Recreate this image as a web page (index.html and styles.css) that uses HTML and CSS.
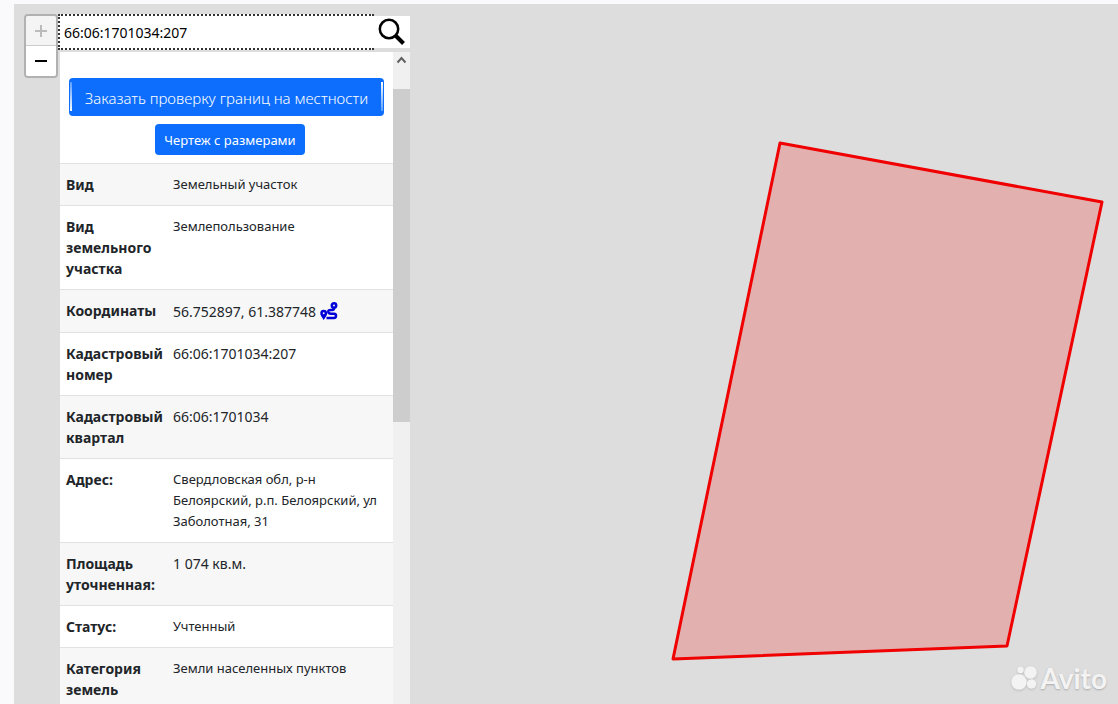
FILE: index.html
```html
<!DOCTYPE html>
<html lang="ru">
<head>
<meta charset="utf-8">
<title>Кадастровая карта</title>
<link rel="stylesheet" href="styles.css">
</head>
<body>
<main class="map">
  <svg class="parcel" width="1104" height="700" viewBox="14 4 1104 700" role="img" aria-label="Граница участка">
    <path d="M780 143L1102 202L1007 646L673 659Z"/>
  </svg>

  <div class="zoom">
    <button class="zoom-btn" type="button" aria-label="Приблизить" disabled>
      <svg width="14" height="14" viewBox="0 0 14 14"><path d="M7 1V13M1 7H13"/></svg>
    </button>
    <button class="zoom-btn" type="button" aria-label="Отдалить">
      <svg width="14" height="14" viewBox="0 0 14 14"><path d="M1 7H13"/></svg>
    </button>
  </div>

  <section class="sidebar">
    <form class="search">
      <input class="search-input" type="text" value="66:06:1701034:207" aria-label="Кадастровый номер">
      <button class="search-btn" type="button" aria-label="Найти">
        <svg width="28" height="28" viewBox="0 0 28 28"><circle cx="11" cy="11" r="9.2"/><path class="handle" d="M17.500 17.500L25.500 25.500"/></svg>
      </button>
    </form>

    <div class="panel">
      <div class="content">
        <div class="actions">
          <button class="btn btn-main" type="button">Заказать проверку границ на местности</button>
          <button class="btn btn-small" type="button">Чертеж с размерами</button>
        </div>
        <table class="info">
          <tbody>
            <tr><th scope="row">Вид</th><td>Земельный участок</td></tr>
            <tr><th scope="row">Вид земельного участка</th><td>Землепользование</td></tr>
            <tr><th scope="row">Координаты</th><td class="num"><div class="coords">56.752897, 61.387748
              <a class="route" href="#route" aria-label="Маршрут"><svg width="18" height="18" viewBox="0 0 18 18"><circle cx="14" cy="3.500" r="2.200"/><path d="M14 6Q14 8 12 8H10.500Q8 8 8.300 10Q8.600 11.700 11 11.700H14Q16 11.700 16 13.800Q16 16 14 16H6.500"/><circle cx="3.700" cy="11.300" r="2.200"/><path d="M2 13L3.700 15.700L5.400 13"/></svg></a></div></td></tr>
            <tr><th scope="row">Кадастровый номер</th><td class="num">66:06:1701034:207</td></tr>
            <tr><th scope="row">Кадастровый квартал</th><td class="num">66:06:1701034</td></tr>
            <tr><th scope="row">Адрес:</th><td>Свердловская обл, р-н Белоярский, р.п. Белоярский, ул Заболотная, 31</td></tr>
            <tr><th scope="row">Площадь уточненная:</th><td class="num">1 074 кв.м.</td></tr>
            <tr><th scope="row">Статус:</th><td>Учтенный</td></tr>
            <tr><th scope="row">Категория земель</th><td>Земли населенных пунктов</td></tr>
          </tbody>
        </table>
      </div>
      <div class="scrollbar" aria-hidden="true">
        <div class="scroll-up"><svg width="11" height="8" viewBox="0 0 11 8"><path d="M1.500 6.500L5.500 2L9.500 6.500"/></svg></div>
        <div class="scroll-thumb"></div>
      </div>
    </div>
  </section>

  <div class="watermark">
    <svg width="28" height="26" viewBox="0 0 28 26"><circle cx="8" cy="17" r="7.700"/><circle cx="19.500" cy="7.500" r="6.300"/><circle cx="9.500" cy="5" r="3.200"/><circle cx="20.500" cy="19" r="4.700"/></svg>
    <span>Avito</span>
  </div>
</main>
</body>
</html>
```
FILE: styles.css
```css
* {
  box-sizing: border-box;
}

body {
  margin: 0;
  height: 100vh;
  padding: 4px 0 0 14px;
  overflow: hidden;
  background: #fafafc;
  color: #212529;
  font: 14px/21px "Noto Sans", "Open Sans", sans-serif;
}

button,
input {
  font: inherit;
  color: inherit;
}

.map {
  position: relative;
  display: flex;
  align-items: flex-start;
  height: 100%;
  padding: 10px;
  padding-bottom: 0;
  background: #ddd;
  overflow: hidden;
}

.parcel {
  position: absolute;
  top: 0;
  left: 0;
}

.parcel path {
  fill: #f00;
  fill-opacity: 0.2;
  stroke: #f00000;
  stroke-width: 3;
  stroke-linejoin: round;
}

.zoom {
  display: flex;
  flex-direction: column;
  width: 34px;
  border: 2px solid #b1b1b1;
  border-radius: 4px;
  overflow: hidden;
}

.zoom-btn {
  display: flex;
  align-items: center;
  justify-content: center;
  height: 30px;
  padding: 0;
  border: 0;
  background: #fff;
}

.zoom-btn:first-child {
  border-bottom: 1px solid #ccc;
  background: #f4f4f4;
}

.zoom-btn path {
  stroke: #000;
  stroke-width: 2;
}

.zoom-btn:disabled path {
  stroke: #bbb;
}

.sidebar {
  display: flex;
  flex-direction: column;
  width: 352px;
  height: 100%;
}

.search {
  display: flex;
  align-items: center;
  height: 36px;
}

.search-input {
  flex: 1;
  min-width: 0;
  height: 36px;
  padding: 0 4px;
  border: 2px dotted #333;
  border-right: 0;
  border-radius: 0;
  outline: 0;
  background: #fff;
  color: #000;
}

.search-btn {
  display: flex;
  align-items: center;
  justify-content: center;
  width: 36px;
  height: 32px;
  padding: 0;
  border: 0;
  background: #fff;
}

.search-btn svg {
  fill: none;
  stroke: #000;
  stroke-width: 2.5;
}

.search-btn .handle {
  stroke-width: 4;
}

.panel {
  display: flex;
  flex: 1;
  min-height: 0;
  margin: 2px 0 0 2px;
}

.content {
  flex: 1;
  overflow: hidden;
  background: #fff;
}

.actions {
  display: flex;
  flex-direction: column;
  gap: 8px;
  padding: 26px 9px 8px;
}

.btn {
  padding: 2px 0 0;
  border: 0;
  border-radius: 4px;
  background: #0d6efd;
  color: #fff;
  white-space: nowrap;
}

.btn-main {
  height: 38px;
  background:
    linear-gradient(#5b9dfe, #fff) 1px 4px / 2px 29px no-repeat,
    linear-gradient(#fff, #5b9dfe) right 1px top 4px / 2px 29px no-repeat,
    #0d6efd;
  font-size: 15px;
  font-weight: 300;
}

.btn-small {
  width: 150px;
  height: 31px;
  margin-left: 86px;
  font-size: 13px;
}

.info {
  width: 100%;
  border-collapse: separate;
  border-spacing: 0;
  table-layout: fixed;
}

.info th,
.info td {
  padding: 10px 6px;
  border-top: 1px solid #dfe1e3;
  text-align: left;
  vertical-align: top;
}

.info th {
  width: 107px;
  font-weight: 700;
}

.info td {
  font-size: 13px;
}

.info .num {
  font-size: 14px;
}

.info tr:nth-child(odd) {
  background: #f7f7f7;
}

.coords {
  display: flex;
  align-items: center;
  gap: 4px;
  height: 22px;
}

.route {
  display: flex;
}

.route svg {
  fill: none;
  stroke: #0000d8;
  stroke-width: 2.5;
}

.scrollbar {
  width: 17px;
  background: #f0f0f0;
}

.scroll-up {
  display: flex;
  justify-content: center;
  height: 37px;
  padding-top: 4px;
}

.scroll-up path {
  fill: none;
  stroke: #606060;
  stroke-width: 2;
}

.scroll-thumb {
  height: 333px;
  background: #cdcdcd;
}

.watermark {
  position: absolute;
  right: 11px;
  bottom: 11px;
  display: flex;
  align-items: center;
  gap: 1px;
  color: #f3f3f3;
  font: 700 28px/30px Lato, sans-serif;
  text-shadow: 0 1px 2px #aaa;
}

.watermark svg {
  fill: #f3f3f3;
  filter: drop-shadow(0 1px 1px #bbb);
}
```
